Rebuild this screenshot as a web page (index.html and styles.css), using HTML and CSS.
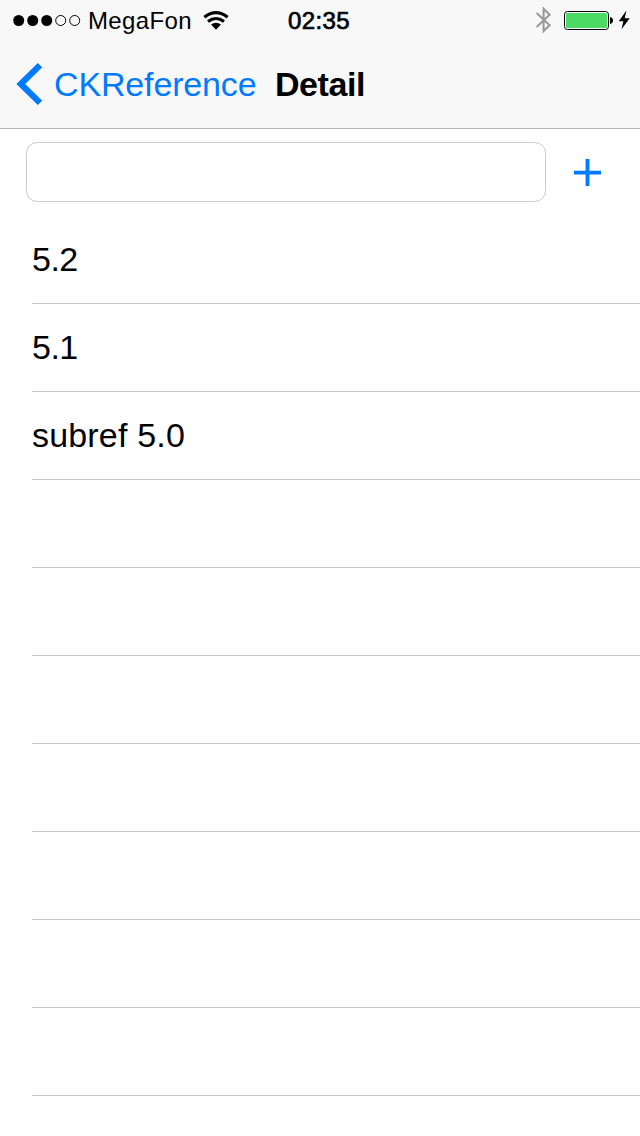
FILE: index.html
```html
<!DOCTYPE html>
<html lang="en">
<head>
<meta charset="utf-8">
<title>Detail</title>
<link rel="stylesheet" href="styles.css">
</head>
<body>
<header class="top">
  <div class="status">
    <div class="status-left">
      <svg class="signal" width="68" height="12" viewBox="0 0 68 12">
        <circle cx="5.7" cy="5.5" r="5.5"/><circle cx="19.7" cy="5.5" r="5.5"/><circle cx="33.7" cy="5.5" r="5.5"/>
        <circle class="empty" cx="47.7" cy="5.5" r="5"/><circle class="empty" cx="61.7" cy="5.5" r="5"/>
      </svg>
      <span class="carrier">MegaFon</span>
      <svg class="wifi" width="26" height="19" viewBox="0 0 26 19">
        <path class="arc" d="M1.4 6.2Q13 -2.8 24.6 6.2M5 10.5Q13 4.5 21 10.5"/>
        <path d="M8 13.6Q13 10 18 13.6L13 18.7Z"/>
      </svg>
    </div>
    <time class="clock">02:35</time>
    <div class="status-right">
      <svg width="17" height="28" viewBox="0 0 17 28">
        <path class="bluetooth" d="M1.6 7L14.6 19.2L8.6 25V2.8L14.6 8.8L1.6 21"/>
      </svg>
      <svg class="battery" width="50" height="20" viewBox="0 0 50 20">
        <rect class="shell" x=".5" y=".5" width="44" height="18" rx="3"/>
        <rect class="charge" x="2" y="2" width="41" height="15" rx="1.2"/>
        <path d="M46 6Q49 6.6 49 9.5T46 13Z"/>
      </svg>
      <svg class="bolt" width="13" height="20" viewBox="0 0 13 20">
        <path d="M8.4 .5L.8 11.2H5.4L3.5 19.3L11.7 8.2H6.7Z"/>
      </svg>
    </div>
  </div>
  <nav class="nav">
    <svg class="back" width="26" height="42" viewBox="0 0 26 42">
      <path d="M24 2.2L4.8 21L24 39.8"/>
    </svg>
    <a class="back-label">CKReference</a>
    <h1 class="title">Detail</h1>
  </nav>
</header>
<main>
  <form class="entry">
    <input class="field" type="text" aria-label="Name">
    <button class="add" type="button" aria-label="Add">
      <svg width="27" height="27" viewBox="0 0 27 27"><path d="M0 13.6H27M13.5 0V27"/></svg>
    </button>
  </form>
  <ul class="list">
    <li class="row number">5.2</li>
    <li class="row number">5.1</li>
    <li class="row">subref 5.0</li>
    <li class="row"></li>
    <li class="row"></li>
    <li class="row"></li>
    <li class="row"></li>
    <li class="row"></li>
    <li class="row"></li>
    <li class="row"></li>
  </ul>
</main>
</body>
</html>
```
FILE: styles.css
```css
* { box-sizing: border-box; }
body {
  margin: 0;
  height: 1136px;
  overflow: hidden;
  background: #fff;
  color: #000;
  font-family: "Liberation Sans", Arial, sans-serif;
}
svg { display: block; flex: none; }
.top { height: 129px; background: #f8f8f8; border-bottom: 1px solid #b2b2b2; }
.status {
  display: grid;
  grid-template-columns: 288px 1fr auto;
  align-items: center;
  height: 40px;
  font-size: 24px;
}
.status-left { display: flex; align-items: center; padding-left: 13px; }
.signal { margin-top: 2px; }
.empty { fill: none; stroke: #000; stroke-width: 1; }
.carrier { margin-left: 7px; padding-top: 2px; letter-spacing: .35px; }
.wifi { margin-left: 11.5px; }
.arc { fill: none; stroke: #000; stroke-width: 3.1; }
.clock { padding-top: 2px; letter-spacing: .4px; -webkit-text-stroke: .7px #000; }
.status-right { display: flex; align-items: center; padding-right: 9px; }
.bluetooth { fill: none; stroke: #999; stroke-width: 2.1; }
.battery { margin: 1px 0 0 12px; }
.shell { fill: #fff; stroke: #000; stroke-width: 1; }
.charge { fill: #4cd964; }
.bolt { margin-left: 4px; }
.nav { display: flex; align-items: center; height: 88px; padding-left: 16px; font-size: 34px; }
.back path { fill: none; stroke: #007aff; stroke-width: 6.2; }
.back-label { margin-left: 12px; color: #007aff; letter-spacing: -.15px; }
.title { margin: 0 0 0 18.5px; font-size: 34px; font-weight: bold; letter-spacing: -.4px; }
.entry { display: flex; height: 87px; padding: 13px 0 0 26px; }
.field {
  width: 520px;
  height: 60px;
  padding: 0 14px;
  border: 1px solid #ccc;
  border-radius: 11px;
  background: #fff;
  font: 28px "Liberation Sans", Arial, sans-serif;
}
.add { height: 60px; margin-left: 28px; padding: 1px 0 0; border: 0; background: none; }
.add path { fill: none; stroke: #007aff; stroke-width: 3.8; }
.list { margin: 0; padding: 0 0 0 32px; list-style: none; }
.row {
  display: flex;
  align-items: center;
  height: 88px;
  border-bottom: 1px solid #c8c7cc;
  font-size: 34px;
  letter-spacing: .18px;
}
.number { letter-spacing: -.5px; }
```
